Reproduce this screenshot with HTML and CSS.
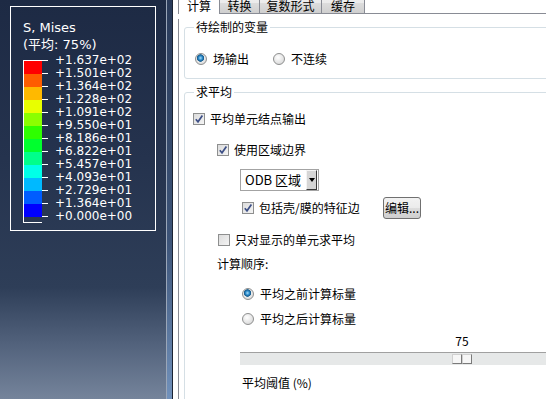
FILE: index.html
```html
<!DOCTYPE html>
<html lang="zh-CN">
<head>
    <meta charset="UTF-8">
    <title>场输出</title>
    <link rel="stylesheet" href="styles.css">
</head>
<body>
    <div class="app">
        <div class="viewport">
            <div class="legend">
                <div class="legend-title">S, Mises</div>
                <div class="legend-title">(平均: 75%)</div>
                <div class="scale">
                    <div class="bars">
                        <div class="bar c1"></div>
                        <div class="bar c2"></div>
                        <div class="bar c3"></div>
                        <div class="bar c4"></div>
                        <div class="bar c5"></div>
                        <div class="bar c6"></div>
                        <div class="bar c7"></div>
                        <div class="bar c8"></div>
                        <div class="bar c9"></div>
                        <div class="bar c10"></div>
                        <div class="bar c11"></div>
                        <div class="bar c12"></div>
                    </div>
                    <div class="labels">
                        <div class="label">+1.637e+02</div>
                        <div class="label">+1.501e+02</div>
                        <div class="label">+1.364e+02</div>
                        <div class="label">+1.228e+02</div>
                        <div class="label">+1.091e+02</div>
                        <div class="label">+9.550e+01</div>
                        <div class="label">+8.186e+01</div>
                        <div class="label">+6.822e+01</div>
                        <div class="label">+5.457e+01</div>
                        <div class="label">+4.093e+01</div>
                        <div class="label">+2.729e+01</div>
                        <div class="label">+1.364e+01</div>
                        <div class="label">+0.000e+00</div>
                    </div>
                </div>
            </div>
        </div>
        <div class="splitter"></div>
        <div class="dialog">
            <div class="tabs">
                <div class="tab active">计算</div>
                <div class="tab t2">转换</div>
                <div class="tab t3">复数形式</div>
                <div class="tab t4">缓存</div>
                <div class="tab-fill"></div>
            </div>
            <div class="panel">
                <fieldset class="group group-vars">
                    <legend>待绘制的变量</legend>
                    <div class="radio-row">
                        <div class="opt"><span class="radio checked"></span>场输出</div>
                        <div class="opt"><span class="radio"></span>不连续</div>
                    </div>
                </fieldset>
                <fieldset class="group group-avg">
                    <legend>求平均</legend>
                    <div class="row row-avg">
                        <span class="check"><svg viewBox="0 0 10 10"><path d="M1.8 5.2 L4 7.8 L8.4 1.6"/></svg></span>平均单元结点输出
                    </div>
                    <div class="row row-region">
                        <span class="check"><svg viewBox="0 0 10 10"><path d="M1.8 5.2 L4 7.8 L8.4 1.6"/></svg></span>使用区域边界
                    </div>
                    <div class="combo">
                        <span class="combo-text">ODB 区域</span>
                        <span class="combo-btn"><span class="arrow"></span></span>
                    </div>
                    <div class="row row-edge">
                        <div class="opt opt-edge">
                            <span class="check"><svg viewBox="0 0 10 10"><path d="M1.8 5.2 L4 7.8 L8.4 1.6"/></svg></span>包括壳/膜的特征边
                        </div>
                        <div class="button">编辑...</div>
                    </div>
                    <div class="row row-shown">
                        <span class="check empty"></span>只对显示的单元求平均
                    </div>
                    <div class="row row-order">计算顺序:</div>
                    <div class="row row-before">
                        <span class="radio checked"></span>平均之前计算标量
                    </div>
                    <div class="row row-after">
                        <span class="radio"></span>平均之后计算标量
                    </div>
                    <div class="row row-value"><span class="value">75</span></div>
                    <div class="slider">
                        <div class="thumb"><span></span><span></span></div>
                    </div>
                    <div class="row row-threshold">平均阈值 (%)</div>
                </fieldset>
            </div>
        </div>
    </div>
</body>
</html>
```

FILE: styles.css
```css
body {
    margin: 0;
    padding: 0;
    background-color: white;
    overflow: hidden;
    font-family: "Noto Sans CJK SC", "Noto Sans", sans-serif;
    font-size: 12px;
    color: #000;
}
.app {
    display: flex;
    width: 546px;
    height: 399px;
    overflow: hidden;
}

/* viewport with the contour legend */
.viewport {
    flex: none;
    width: 166px;
    height: 399px;
    background: linear-gradient(#1d2a44 0%, #25334e 40%, #2e3e58 72%, #54647e 87%, #75849b 100%);
    padding: 6px 0 0 10px;
    box-sizing: border-box;
}
.legend {
    width: 146px;
    height: 225px;
    box-sizing: border-box;
    border: 1px solid #fff;
    padding: 12px 0 0 12px;
    color: #fff;
    font-family: "DejaVu Sans", "Noto Sans CJK SC", sans-serif;
}
.legend-title {
    font-size: 13px;
    line-height: 17px;
    white-space: nowrap;
}
.scale {
    display: flex;
    margin-top: 7px;
}
.bars {
    width: 18px;
    border: 1px solid #fff;
    border-right: none;
}
.bar {
    height: 13px;
}
.c1 { background-color: #ff0000; }
.c2 { background-color: #ff5d00; }
.c3 { background-color: #ffb900; }
.c4 { background-color: #e8ff00; }
.c5 { background-color: #8bff00; }
.c6 { background-color: #2eff00; }
.c7 { background-color: #00ff2e; }
.c8 { background-color: #00ff8b; }
.c9 { background-color: #00ffe8; }
.c10 { background-color: #00b9ff; }
.c11 { background-color: #005dff; }
.c12 { background-color: #0000ff; }
.labels {
    margin-top: -6px;
}
.label {
    display: flex;
    align-items: center;
    height: 13px;
    line-height: 13px;
    font-size: 12px;
    white-space: nowrap;
}
.label::before {
    content: "";
    width: 6px;
    height: 1px;
    background-color: #fff;
    margin-right: 7px;
}

.splitter {
    flex: none;
    width: 5px;
    border-left: 1px solid #9aa6b8;
    border-right: 1px solid #1c2433;
    background: linear-gradient(#2a3b5a, #3d5478 60%, #7191bb);
}

/* dialog */
.dialog {
    flex: none;
    width: 420px;
    padding-left: 5px;
}
.tabs {
    display: flex;
    margin-top: -8px;
    height: 22px;
}
.tab {
    box-sizing: border-box;
    height: 22px;
    line-height: 25px;
    text-align: center;
    border: 1px solid #898c95;
    border-left: none;
    background: linear-gradient(#f2f2f2, #ebebeb 50%, #dddddd 50%, #cfcfcf);
    white-space: nowrap;
    overflow: hidden;
}
.tab.active {
    width: 42px;
    border-left: 1px solid #898c95;
    border-bottom: none;
    background: #fff;
}
.t2 { width: 40px; }
.t3 { width: 62px; }
.t4 { width: 43px; }
.tab-fill {
    flex: 1;
    border-bottom: 1px solid #898c95;
}
.panel {
    border-left: 1px solid #898c95;
    padding: 0 0 0 5px;
    height: 400px;
}
.group {
    margin: 5px 0 0 0;
    padding: 0;
    min-width: 0;
    border: 1px solid #d5dfe5;
    border-radius: 3px;
}
.group legend {
    margin-left: 9px;
    padding: 0 2px;
    line-height: 16px;
}
.group-vars {
    padding: 16px 0 11px 0;
}
.group-avg {
    padding: 11px 0 30px 0;
}
.radio-row {
    display: flex;
    height: 16px;
    padding-left: 10px;
}
.opt {
    display: flex;
    align-items: center;
    line-height: 16px;
    white-space: nowrap;
}
.radio-row .opt {
    width: 78px;
}
.radio {
    flex: none;
    width: 12px;
    height: 12px;
    box-sizing: border-box;
    border-radius: 50%;
    border: 1px solid #8e8f8f;
    background: radial-gradient(circle at 40% 35%, #ffffff, #dedede 70%, #c9c9c9);
    margin-right: 6px;
}
.radio.checked {
    background: radial-gradient(circle at 45% 40%, #a9dcf6 0, #2b8ccc 2px, #1a5f93 3px, #2b6e9b 3.5px, #e9e9e9 4px, #cfcfcf);
}
.row {
    display: flex;
    align-items: center;
    height: 16px;
    line-height: 16px;
    white-space: nowrap;
}
.check {
    flex: none;
    width: 12px;
    height: 12px;
    box-sizing: border-box;
    border: 1px solid #8e8f8f;
    background: linear-gradient(135deg, #dcdcdc, #f4f4f4);
    margin-right: 5px;
    display: flex;
    align-items: center;
    justify-content: center;
}
.check svg {
    width: 10px;
    height: 10px;
}
.check path {
    fill: none;
    stroke: #3d4f86;
    stroke-width: 1.7;
}
.row-avg {
    padding-left: 8px;
}
.row-region {
    margin-top: 15px;
    padding-left: 32px;
}
.combo {
    display: flex;
    align-items: center;
    width: 79px;
    height: 22px;
    box-sizing: border-box;
    border: 1px solid #a3a3a3;
    margin: 11px 0 0 55px;
    padding: 0 1px 0 4px;
    white-space: nowrap;
    font-size: 13px;
}
.combo-text {
    flex: 1;
    line-height: 16px;
}
.combo-btn {
    width: 9px;
    height: 18px;
    border: 1px solid;
    border-color: #f4f4f4 #3a3a3a #3a3a3a #f4f4f4;
    background-color: #d6d6d6;
    display: flex;
    align-items: center;
    justify-content: center;
}
.arrow {
    width: 0;
    height: 0;
    border-left: 3px solid transparent;
    border-right: 3px solid transparent;
    border-top: 4px solid #000;
}
.row-edge {
    height: 22px;
    margin-top: 6px;
    padding-left: 57px;
}
.opt-edge {
    width: 141px;
}
.button {
    width: 38px;
    height: 22px;
    box-sizing: border-box;
    border: 1px solid #707070;
    border-radius: 3px;
    background: linear-gradient(#f2f2f2, #ebebeb 50%, #dddddd 50%, #cfcfcf);
    text-align: center;
    line-height: 20px;
}
.row-shown {
    margin-top: 13px;
    padding-left: 33px;
}
.row-order {
    margin-top: 8px;
    padding-left: 32px;
}
.row-before {
    margin-top: 14px;
    padding-left: 57px;
}
.row-after {
    margin-top: 9px;
    padding-left: 57px;
}
.row-value {
    margin-top: 6px;
    padding-left: 267px;
}
.value {
    width: 20px;
    text-align: center;
}
.slider {
    height: 13px;
    box-sizing: border-box;
    margin: 3px 0 0 55px;
    border-top: 1px solid #a0a0a0;
    background-color: #e6e8e8;
    padding-top: 1px;
}
.thumb {
    display: flex;
    margin-left: 212px;
}
.thumb span {
    width: 10px;
    height: 10px;
    box-sizing: border-box;
    border: 1px solid;
    border-color: #d0d0d0 #7a7a7a #7a7a7a #d0d0d0;
    background-color: #f6f6f6;
}
.row-threshold {
    margin-top: 10px;
    padding-left: 57px;
}
```
